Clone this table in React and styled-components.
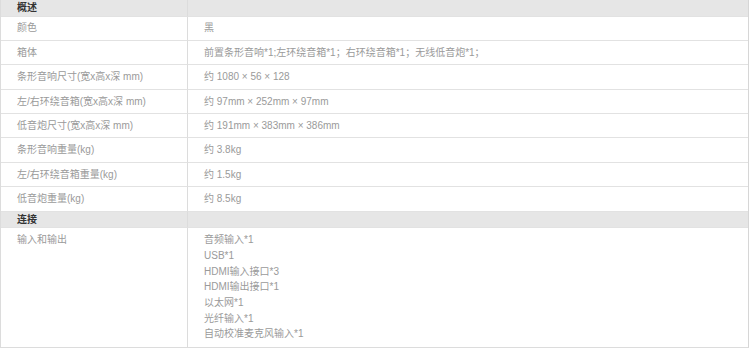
import React from 'react'
import styled, { createGlobalStyle } from 'styled-components'

const GlobalStyle = createGlobalStyle`
  html, body {
    margin: 0;
    padding: 0;
    background: #ffffff;
  }
  body {
    font-family: "Liberation Sans", "Noto Sans CJK SC", sans-serif;
  }
`

const SpecTable = styled.div`
  width: 749px;
  border-left: 1px solid #dcdcdc;
  border-right: 1px solid #d6d6d6;
  border-bottom: 1px solid #dcdcdc;
  box-sizing: border-box;
  display: grid;
  grid-template-columns: 187px 1fr;
`

const Cell = styled.div`
  box-sizing: border-box;
  height: ${({ $head, $tall }) => ($tall ? 'auto' : $head ? '16.5px' : '24.4px')};
  padding: ${({ $tall }) => ($tall ? '4px 16px 5px' : '0 16px')};
  display: flex;
  flex-direction: column;
  justify-content: ${({ $tall }) => ($tall ? 'flex-start' : 'center')};
  background: ${({ $head }) => ($head ? '#e6e6e6' : '#ffffff')};
  border-bottom: ${({ $last }) => ($last ? 'none' : '1px solid #e2e2e2')};
  border-right: ${({ $left }) => ($left ? '1px solid #dcdcdc' : 'none')};
  font-size: 10px;
  line-height: 15.7px;
  font-weight: ${({ $head }) => ($head ? 700 : 400)};
  color: ${({ $head }) => ($head ? '#333333' : '#9a9a9a')};
  white-space: nowrap;
`

const sections = [
  {
    title: '概述',
    rows: [
      ['颜色', ['黑']],
      ['箱体', ['前置条形音响*1;左环绕音箱*1；右环绕音箱*1；无线低音炮*1；']],
      ['条形音响尺寸(宽x高x深 mm)', ['约 1080 × 56 × 128']],
      ['左/右环绕音箱(宽x高x深 mm)', ['约 97mm × 252mm × 97mm']],
      ['低音炮尺寸(宽x高x深 mm)', ['约 191mm × 383mm × 386mm']],
      ['条形音响重量(kg)', ['约 3.8kg']],
      ['左/右环绕音箱重量(kg)', ['约 1.5kg']],
      ['低音炮重量(kg)', ['约 8.5kg']],
    ],
  },
  {
    title: '连接',
    rows: [
      [
        '输入和输出',
        [
          '音频输入*1',
          'USB*1',
          'HDMI输入接口*3',
          'HDMI输出接口*1',
          '以太网*1',
          '光纤输入*1',
          '自动校准麦克风输入*1',
        ],
      ],
    ],
  },
]

export default function App() {
  return (
    <>
      <GlobalStyle />
      <SpecTable>
        {sections.map((section, si) => (
          <React.Fragment key={section.title}>
            <Cell $head $left>{section.title}</Cell>
            <Cell $head />
            {section.rows.map(([label, values], ri) => {
              const tall = values.length > 1
              const last = si === sections.length - 1 && ri === section.rows.length - 1
              return (
                <React.Fragment key={label}>
                  <Cell $left $tall={tall} $last={last}>{label}</Cell>
                  <Cell $tall={tall} $last={last}>
                    {values.map((v) => (
                      <span key={v}>{v}</span>
                    ))}
                  </Cell>
                </React.Fragment>
              )
            })}
          </React.Fragment>
        ))}
      </SpecTable>
    </>
  )
}
